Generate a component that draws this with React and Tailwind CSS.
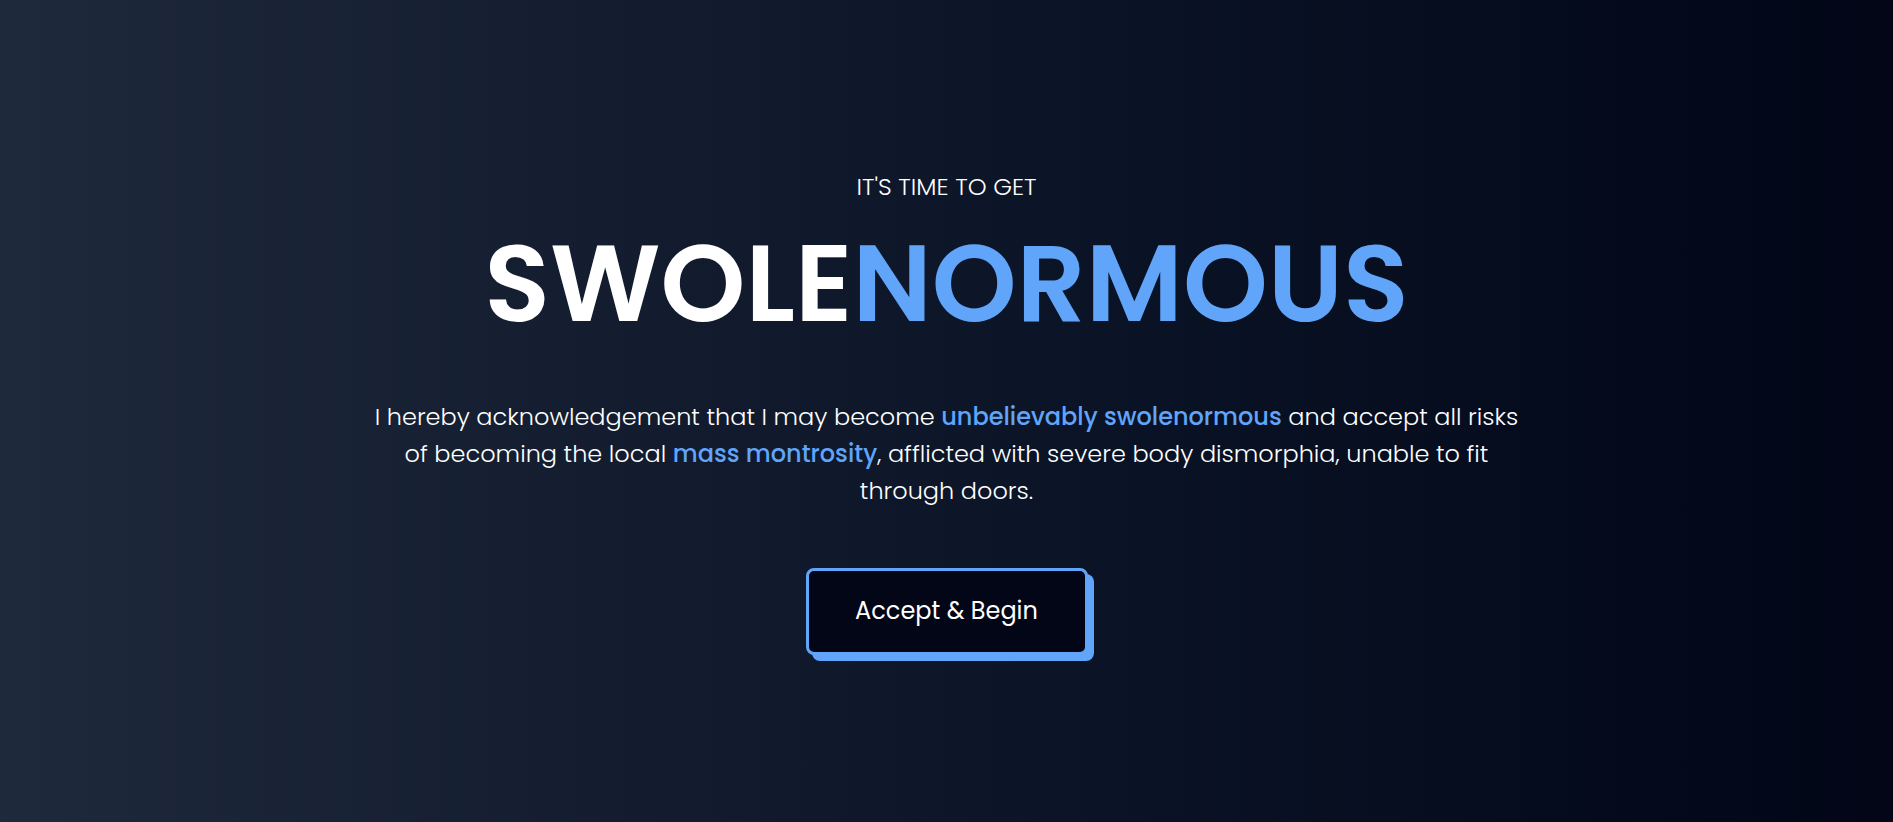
export default function App() {
  return (
    <div
      className="min-h-screen w-full flex items-center justify-center bg-linear-to-r from-[#1e293b] to-[#020617] pt-[3px] text-white"
      style={{ fontFamily: '"Poppins", "DejaVu Sans", sans-serif' }}
    >
      <div className="flex flex-col items-center text-center">
        <p className="text-[24px] font-light leading-8 uppercase">It's time to get</p>

        <h1 className="mt-[27px] text-[108px] font-semibold leading-none">
          SWOLE<span className="text-[#60a5fa]">NORMOUS</span>
        </h1>

        <p className="mt-[60px] max-w-[1160px] text-[24px] font-light leading-[37px]">
          I hereby acknowledgement that I may become{" "}
          <span className="font-medium text-[#60a5fa]">unbelievably swolenormous</span>{" "}
          and accept all risks of becoming the local{" "}
          <span className="font-medium text-[#60a5fa]">mass montrosity</span>, afflicted with
          severe body dismorphia, unable to fit through doors.
        </p>

        <button className="mt-[59px] w-[282px] h-[87px] rounded-lg border-[3px] border-[#60a5fa] bg-[#020617] text-[24px] text-white shadow-[6px_6px_0_#60a5fa]">
          Accept &amp; Begin
        </button>
      </div>
    </div>
  );
}
